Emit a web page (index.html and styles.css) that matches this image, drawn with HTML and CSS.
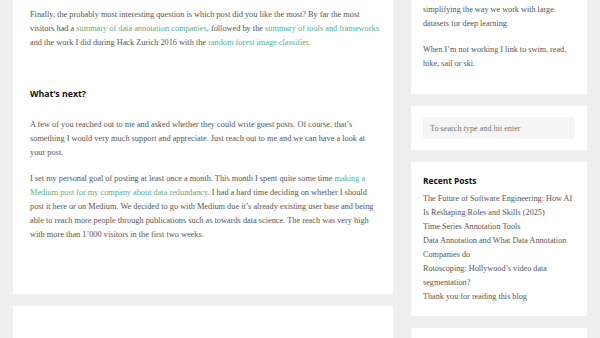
FILE: index.html
```html
<!DOCTYPE html>
<html>
<head>
<meta charset="utf-8">
<link rel="stylesheet" href="styles.css">
</head>
<body>
<div class="page">
  <main class="main">
    <article class="card post">
      <p>Finally, the probably most interesting question is which post did you like the most? By far the most visitors had a <a href="#">summary of data annotation companies</a>, followed by the <a href="#">summary of tools and frameworks</a> and the work I did during Hack Zurich 2016 with the <a href="#">random forest image classifier</a>.</p>
      <h3>What’s next?</h3>
      <p>A few of you reached out to me and asked whether they could write guest posts. Of course, that’s something I would very much support and appreciate. Just reach out to me and we can have a look at your post.</p>
      <p>I set my personal goal of posting at least once a month. This month I spent quite some time <a href="#">making a Medium post for my company about data redundancy</a>. I had a hard time deciding on whether I should post it here or on Medium. We decided to go with Medium due it’s already existing user base and being able to reach more people through publications such as towards data science. The reach was very high with more than 1’000 visitors in the first two weeks.</p>
    </article>
    <section class="card next"></section>
  </main>
  <aside class="sidebar">
    <div class="card widget about">
      <p>simplifying the way we work with large datasets for deep learning.</p>
      <p>When I’m not working I link to swim, read, hike, sail or ski.</p>
    </div>
    <div class="card widget search">
      <input class="search-input" type="text" placeholder="To search type and hit enter">
    </div>
    <div class="card widget recent">
      <h4>Recent Posts</h4>
      <ul>
        <li><a href="#">The Future of Software Engineering: How AI Is Reshaping Roles and Skills (2025)</a></li>
        <li><a href="#">Time Series Annotation Tools</a></li>
        <li><a href="#">Data Annotation and What Data Annotation Companies do</a></li>
        <li><a href="#">Rotoscoping: Hollywood’s video data segmentation?</a></li>
        <li><a href="#">Thank you for reading this blog</a></li>
      </ul>
    </div>
    <div class="card widget more"></div>
  </aside>
</div>
</body>
</html>
```
FILE: styles.css
```css
html, body {
  margin: 0;
  padding: 0;
  background: #eeeeee;
}
body {
  font-family: "Liberation Serif", "Times New Roman", serif;
  font-size: 8.3px;
  line-height: 14px;
  color: #555555;
  overflow: hidden;
  height: 338px;
}
.page {
  display: flex;
  gap: 18px;
  padding: 0 13px;
}
.main {
  width: 380px;
  display: flex;
  flex-direction: column;
  gap: 12px;
}
.sidebar {
  width: 176px;
  display: flex;
  flex-direction: column;
  gap: 12px;
  font-size: 8.2px;
}
.card {
  background: #ffffff;
}
.post {
  padding: 8px 13px 52px 17px;
}
p {
  margin: 0 0 12px 0;
}
.post p:last-child {
  margin-bottom: 0;
}
a {
  color: #55b085;
  text-decoration: none;
}
.post h3 {
  font-family: "Open Sans", sans-serif;
  font-weight: 700;
  font-size: 8.8px;
  line-height: 14px;
  color: #111111;
  margin: 37px 0 17px 0;
}
.next {
  height: 60px;
}
.widget {
  padding: 12px;
}
.about {
  padding: 3px 12px 23px;
}
.about p:last-child {
  margin-bottom: 0;
}
.search {
  padding: 11px 12px;
}
.search-input {
  display: block;
  box-sizing: border-box;
  width: 100%;
  height: 22px;
  border: none;
  background: #f5f5f5;
  padding: 0 7px;
  font-family: "Liberation Serif", serif;
  font-size: 8.2px;
  color: #555;
  outline: none;
}
.search-input::placeholder {
  color: #777777;
}
.recent {
  padding: 12px 12px 12px;
}
.recent h4 {
  font-family: "Open Sans", sans-serif;
  font-weight: 700;
  font-size: 8.4px;
  line-height: 14px;
  color: #111111;
  margin: 0 0 4px 0;
}
.recent ul {
  list-style: none;
  margin: 0;
  padding: 0;
}
.recent a {
  color: #555555;
}
.more {
  height: 40px;
}
```
